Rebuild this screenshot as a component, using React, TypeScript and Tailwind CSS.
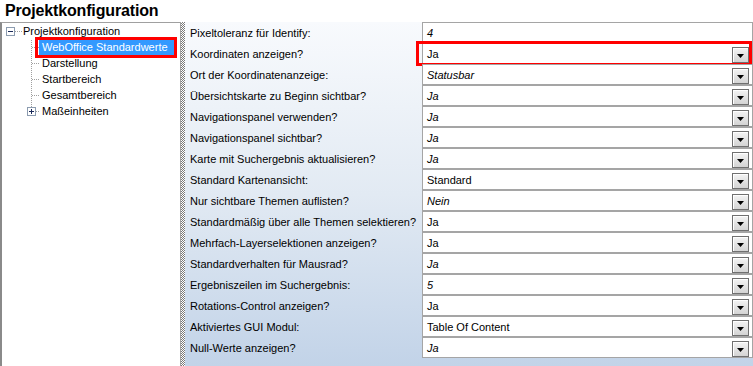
import React from "react";

interface Setting {
  label: string;
  value: string;
  italic: boolean;
  dropdown: boolean;
  marked?: boolean;
}

const settings: Setting[] = [
  { label: "Pixeltoleranz für Identify:", value: "4", italic: true, dropdown: false },
  { label: "Koordinaten anzeigen?", value: "Ja", italic: false, dropdown: true, marked: true },
  { label: "Ort der Koordinatenanzeige:", value: "Statusbar", italic: true, dropdown: true },
  { label: "Übersichtskarte zu Beginn sichtbar?", value: "Ja", italic: true, dropdown: true },
  { label: "Navigationspanel verwenden?", value: "Ja", italic: true, dropdown: true },
  { label: "Navigationspanel sichtbar?", value: "Ja", italic: true, dropdown: true },
  { label: "Karte mit Suchergebnis aktualisieren?", value: "Ja", italic: true, dropdown: true },
  { label: "Standard Kartenansicht:", value: "Standard", italic: false, dropdown: true },
  { label: "Nur sichtbare Themen auflisten?", value: "Nein", italic: true, dropdown: true },
  { label: "Standardmäßig über alle Themen selektieren?", value: "Ja", italic: false, dropdown: true },
  { label: "Mehrfach-Layerselektionen anzeigen?", value: "Ja", italic: false, dropdown: true },
  { label: "Standardverhalten für Mausrad?", value: "Ja", italic: true, dropdown: true },
  { label: "Ergebniszeilen im Suchergebnis:", value: "5", italic: true, dropdown: true },
  { label: "Rotations-Control anzeigen?", value: "Ja", italic: false, dropdown: true },
  { label: "Aktiviertes GUI Modul:", value: "Table Of Content", italic: false, dropdown: true },
  { label: "Null-Werte anzeigen?", value: "Ja", italic: true, dropdown: true },
];

const children = ["Darstellung", "Startbereich", "Gesamtbereich"];

function DropButton() {
  return (
    <div className="ml-auto mr-[3px] w-[17px] h-[16px] border border-[#707070] bg-linear-to-b from-[#f4f4f4] to-[#d4d4d4] shadow-[inset_1px_1px_0_#ffffff] flex items-center justify-center">
      <svg width="7" height="4" viewBox="0 0 7 4" className="mt-[2px]">
        <polygon points="0,0 7,0 3.5,4" fill="#000" />
      </svg>
    </div>
  );
}

function TreeLines() {
  // connector lines and expander boxes of the tree
  return (
    <svg className="absolute top-0 left-0" width="180" height="120">
      <g stroke="#a0a0a0" strokeWidth="1" strokeDasharray="1 1" fill="none">
        <line x1="13" y1="8.5" x2="20" y2="8.5" />
        <line x1="29.5" y1="17" x2="29.5" y2="84" />
        <line x1="30" y1="24.5" x2="38" y2="24.5" />
        <line x1="30" y1="40.5" x2="38" y2="40.5" />
        <line x1="30" y1="56.5" x2="38" y2="56.5" />
        <line x1="30" y1="72.5" x2="38" y2="72.5" />
        <line x1="34" y1="88.5" x2="38" y2="88.5" />
      </g>
      <rect x="4.5" y="4.5" width="8" height="8" fill="#fff" stroke="#8c9cb0" />
      <line x1="6" y1="8.5" x2="11" y2="8.5" stroke="#1a2a5a" />
      <rect x="25.5" y="84.5" width="8" height="8" fill="#fff" stroke="#8c9cb0" />
      <line x1="27" y1="88.5" x2="32" y2="88.5" stroke="#1a2a5a" />
      <line x1="29.5" y1="86" x2="29.5" y2="91" stroke="#1a2a5a" />
    </svg>
  );
}

export default function App() {
  return (
    <div className="w-[753px] h-[366px] bg-white flex flex-col overflow-hidden text-[11px] text-black font-['Liberation_Sans',Arial,sans-serif]">
      {/* Title */}
      <div className="h-[22px] pl-[5px] text-[16px] font-bold leading-[22px] tracking-[-0.15px]">
        Projektkonfiguration
      </div>

      <div className="flex flex-1 min-h-0">
        {/* Tree */}
        <div className="w-[181px] border-l-2 border-l-[#8a8a8a] border-t border-t-[#a0a0a0] border-r border-r-[#a0a0a0] bg-white relative">
          <TreeLines />
          <div className="relative flex flex-col">
            <div className="h-[16px] flex items-center pl-[21px]">Projektkonfiguration</div>
            <div className="h-[16px] flex items-center pl-[37px]">
              <div className="relative w-[135px] h-[16px] bg-[#3399ff] text-white pl-[3px] flex items-center">
                WebOffice Standardwerte
                <div className="absolute -left-[4px] -top-[2px] -right-[3px] -bottom-[3px] border-[3px] border-[#ff0000]" />
              </div>
            </div>
            {children.map((c) => (
              <div key={c} className="h-[16px] flex items-center pl-[40px]">
                {c}
              </div>
            ))}
            <div className="h-[16px] flex items-center pl-[40px]">Maßeinheiten</div>
          </div>
        </div>

        {/* Splitter */}
        <div className="w-[4px] bg-[repeating-conic-gradient(#7a7a7a_0_25%,#ffffff_0_50%)] bg-[length:2px_2px]" />

        {/* Settings grid */}
        <div className="flex-1 bg-linear-to-b from-[#f8fafd] via-[#e2eaf3] to-[#c2d3e8] flex">
          <div className="w-[237px] flex flex-col">
            {settings.map((s) => (
              <div key={s.label} className="h-[21px] flex items-center pl-[5px] pt-[2px] whitespace-nowrap">
                {s.label}
              </div>
            ))}
          </div>
          <div className="flex-1 flex flex-col">
            {settings.map((s) => (
              <div
                key={s.label}
                className="relative h-[21px] border border-[#a5a5a5] bg-white flex items-center pl-[4px] pt-[2px]"
              >
                <span className={s.italic ? "italic" : ""}>{s.value}</span>
                {s.dropdown && <DropButton />}
                {s.marked && (
                  <div className="absolute -left-[7px] -top-[3px] right-0 -bottom-[3px] border-[3px] border-[#ff0000]" />
                )}
              </div>
            ))}
          </div>
        </div>
      </div>
    </div>
  );
}
